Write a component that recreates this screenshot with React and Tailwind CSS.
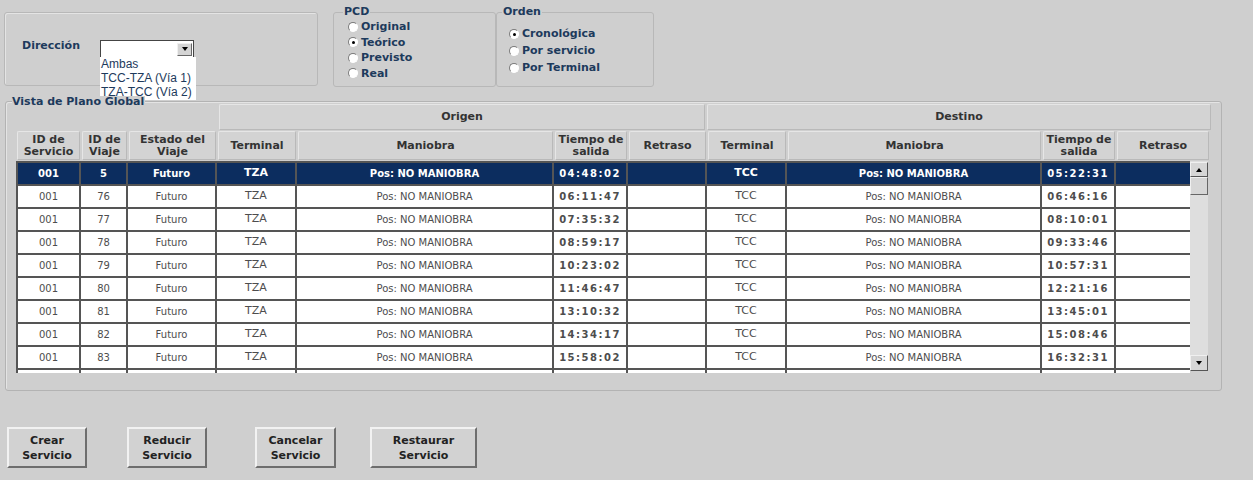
import React from "react";

const rows = [
  ["001", "5", "04:48:02", "05:22:31"],
  ["001", "76", "06:11:47", "06:46:16"],
  ["001", "77", "07:35:32", "08:10:01"],
  ["001", "78", "08:59:17", "09:33:46"],
  ["001", "79", "10:23:02", "10:57:31"],
  ["001", "80", "11:46:47", "12:21:16"],
  ["001", "81", "13:10:32", "13:45:01"],
  ["001", "82", "14:34:17", "15:08:46"],
  ["001", "83", "15:58:02", "16:32:31"],
  null,
];

function Radio({ checked, label }) {
  return (
    <div className="flex items-center gap-[3px]">
      <span className="w-[10px] h-[10px] rounded-full bg-white border border-[#7a7a7a] border-b-white border-r-white flex items-center justify-center">
        {checked && <span className="w-[3px] h-[3px] rounded-full bg-black" />}
      </span>
      <span className="text-[11px] font-bold text-[#1d3a5c]">{label}</span>
    </div>
  );
}

function HeadCell({ w, children }) {
  return (
    <div className={`${w} px-[1px] h-full`}>
      <div className="h-full bg-[#d3d3d3] border border-[#b9b9b9] border-t-[#e6e6e6] border-l-[#e6e6e6] rounded-t-[2px] flex items-center justify-center text-center text-[11px] font-bold text-[#333] leading-[12px]">
        {children}
      </div>
    </div>
  );
}

function Cell({ w, sel, children, cls = "" }) {
  return (
    <div
      className={`${w} h-full border-r-2 border-[#555] flex items-center justify-center ${
        sel ? "text-white font-bold" : "text-[#4d4d4d]"
      } ${cls}`}
    >
      {children}
    </div>
  );
}

function Button({ w, ml, a, b }) {
  return (
    <button
      className={`${w} ${ml} h-[41px] bg-[#d2d2d2] border-2 border-[#f2f2f2] border-r-[#6e6e6e] border-b-[#6e6e6e] text-[11px] font-bold text-[#222] leading-[15px] flex flex-col items-center justify-center`}
    >
      <span>{a}</span>
      <span>{b}</span>
    </button>
  );
}

export default function App() {
  return (
    <div className="w-[1253px] h-[480px] bg-[#cfcfcf] overflow-hidden font-['DejaVu_Sans',Verdana,sans-serif]">
      {/* top controls */}
      <div className="h-[101px] flex items-start">
        <div className="ml-[4px] mt-[12px] w-[314px] h-[74px] border border-[#b8b8b8] rounded-[3px] shadow-[inset_1px_1px_0_#e4e4e4] flex items-start">
          <span className="ml-[17px] mt-[25px] text-[11px] font-bold text-[#1d3a5c]">Dirección</span>
          <div className="relative ml-[20px] mt-[27px] w-[94px] h-[18px] bg-white border border-[#444] flex justify-end items-center pr-[1px]">
            <div className="w-[15px] h-[13px] bg-[#d4d4d4] border border-[#f0f0f0] border-r-[#666] border-b-[#666] flex items-center justify-center">
              <span className="w-0 h-0 border-l-[3px] border-r-[3px] border-t-[4px] border-l-transparent border-r-transparent border-t-black" />
            </div>
            <div className="absolute left-[-1px] top-full w-[96px] bg-white pl-[1px] pb-[1px] font-['Liberation_Sans',Arial,sans-serif] text-[12px] text-[#1d3a5c] leading-[14px]">
              <div>Ambas</div>
              <div>TCC-TZA (Vía 1)</div>
              <div>TZA-TCC (Vía 2)</div>
            </div>
          </div>
        </div>

        <fieldset className="ml-[15px] mt-[5px] w-[163px] h-[82px] border border-[#b8b8b8] rounded-[3px] pl-[14px]">
          <legend className="ml-[-5px] px-[1px] text-[11px] font-bold text-[#1d3a5c] leading-[14px]">PCD</legend>
          <div className="flex flex-col leading-[15.5px]">
            <Radio label="Original" />
            <Radio label="Teórico" checked />
            <Radio label="Previsto" />
            <Radio label="Real" />
          </div>
        </fieldset>

        <fieldset className="mt-[5px] w-[158px] h-[82px] border border-[#b8b8b8] rounded-[3px] pl-[12px]">
          <legend className="ml-[-7px] px-[1px] text-[11px] font-bold text-[#1d3a5c] leading-[14px]">Orden</legend>
          <div className="flex flex-col gap-[5px] mt-[9px] leading-[12px]">
            <Radio label="Cronológica" checked />
            <Radio label="Por servicio" />
            <Radio label="Por Terminal" />
          </div>
        </fieldset>
      </div>

      {/* main group */}
      <div className="relative ml-[5px] w-[1217px] h-[290px] border border-[#b3b3b3] rounded-[3px] shadow-[inset_1px_1px_0_#e4e4e4] pl-[10px] pt-[2px]">
        <span className="absolute left-[6px] top-[-6px] bg-[#cfcfcf] pr-[1px] text-[11px] font-bold text-[#1d3a5c] leading-[12px]">
          Vista de Plano Global
        </span>

        <div className="flex h-[26px]">
          <div className="w-[202px]" />
          <HeadCell w="w-[488px]">Origen</HeadCell>
          <HeadCell w="w-[506px]">Destino</HeadCell>
        </div>

        <div className="flex h-[29px] mt-[1px]">
          <HeadCell w="w-[65px]">ID de<br />Servicio</HeadCell>
          <HeadCell w="w-[47px]">ID de<br />Viaje</HeadCell>
          <HeadCell w="w-[89px]">Estado del<br />Viaje</HeadCell>
          <HeadCell w="w-[80px]">Terminal</HeadCell>
          <HeadCell w="w-[257px]">Maniobra</HeadCell>
          <HeadCell w="w-[74px]">Tiempo de<br />salida</HeadCell>
          <HeadCell w="w-[79px]">Retraso</HeadCell>
          <HeadCell w="w-[80px]">Terminal</HeadCell>
          <HeadCell w="w-[255px]">Maniobra</HeadCell>
          <HeadCell w="w-[74px]">Tiempo de<br />salida</HeadCell>
          <HeadCell w="w-[94px]">Retraso</HeadCell>
        </div>

        <div className="flex h-[212px] mt-[1px]">
          <div className="w-[1174px] h-full overflow-hidden bg-white border-t-2 border-l-2 border-[#555]">
            {rows.map((r, i) => {
              const sel = i === 0;
              const v = r || ["", "", "", ""];
              return (
                <div
                  key={i}
                  className={`flex h-[23px] border-b-2 border-[#555] text-[10px] ${sel ? "bg-[#0c2d5f]" : "bg-white"}`}
                >
                  <Cell w="w-[63px]" sel={sel}>{v[0]}</Cell>
                  <Cell w="w-[47px]" sel={sel}>{v[1]}</Cell>
                  <Cell w="w-[89px]" sel={sel}>{r ? "Futuro" : ""}</Cell>
                  <Cell w="w-[80px]" sel={sel} cls="text-[11px]">{r ? "TZA" : ""}</Cell>
                  <Cell w="w-[257px]" sel={sel}>{r ? "Pos: NO MANIOBRA" : ""}</Cell>
                  <Cell w="w-[74px]" sel={sel} cls="font-bold tracking-[1.5px]">{v[2]}</Cell>
                  <Cell w="w-[79px]" sel={sel}></Cell>
                  <Cell w="w-[80px]" sel={sel} cls="text-[11px]">{r ? "TCC" : ""}</Cell>
                  <Cell w="w-[255px]" sel={sel}>{r ? "Pos: NO MANIOBRA" : ""}</Cell>
                  <Cell w="w-[74px]" sel={sel} cls="font-bold tracking-[1.5px]">{v[3]}</Cell>
                  <div className="w-[74px]" />
                </div>
              );
            })}
          </div>
          <div className="w-[18px] h-[210px] bg-[#dedede] flex flex-col justify-between pt-[1px]">
            <div>
              <div className="h-[15px] bg-[#d6d6d6] border border-[#f0f0f0] border-r-[#555] border-b-[#555] flex items-center justify-center">
                <span className="w-0 h-0 border-l-[3px] border-r-[3px] border-b-[4px] border-l-transparent border-r-transparent border-b-black" />
              </div>
              <div className="h-[18px] bg-[#d6d6d6] border border-[#f0f0f0] border-r-[#666] border-b-[#666]" />
            </div>
            <div className="h-[16px] bg-[#d6d6d6] border border-[#f0f0f0] border-r-[#555] border-b-[#555] flex items-center justify-center">
              <span className="w-0 h-0 border-l-[3px] border-r-[3px] border-t-[4px] border-l-transparent border-r-transparent border-t-black" />
            </div>
          </div>
        </div>
      </div>

      {/* buttons */}
      <div className="flex mt-[36px]">
        <Button w="w-[80px]" ml="ml-[7px]" a="Crear" b="Servicio" />
        <Button w="w-[80px]" ml="ml-[40px]" a="Reducir" b="Servicio" />
        <Button w="w-[81px]" ml="ml-[48px]" a="Cancelar" b="Servicio" />
        <Button w="w-[107px]" ml="ml-[34px]" a="Restaurar" b="Servicio" />
      </div>
    </div>
  );
}
